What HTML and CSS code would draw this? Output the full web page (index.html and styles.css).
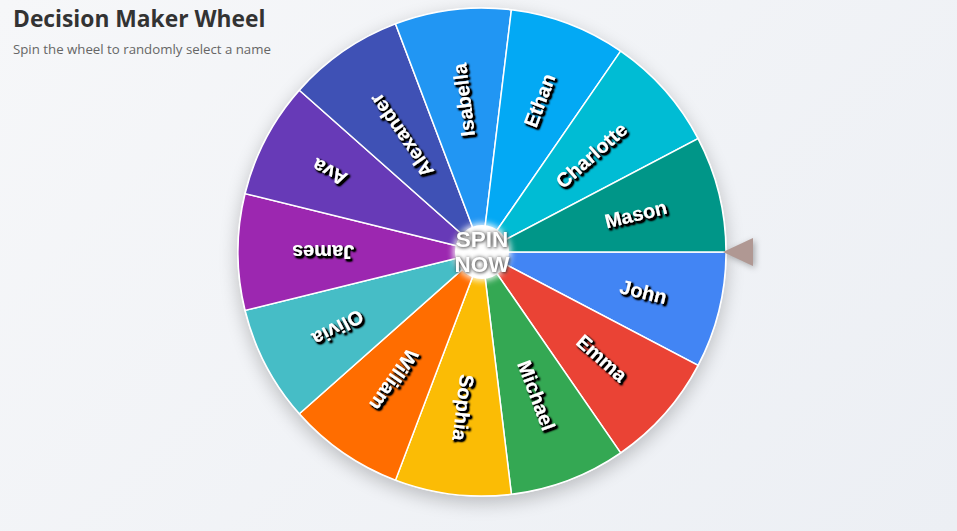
FILE: index.html
```html
<!DOCTYPE html>
<html lang="en">
<head>
<meta charset="utf-8">
<title>Decision Maker Wheel</title>
<link rel="stylesheet" href="styles.css">
</head>
<body>
<div class="page">
  <header class="header">
    <h1 class="title">Decision Maker Wheel</h1>
    <p class="subtitle">Spin the wheel to randomly select a name</p>
  </header>
  <main class="stage">
    <div class="wheel-wrap">
      <div class="wheel">
        <svg class="wheel-svg" width="490" height="490" viewBox="-245 -245 490 490">
          <defs>
            <filter id="ts" x="-20%" y="-20%" width="140%" height="140%">
              <feGaussianBlur in="SourceAlpha" stdDeviation="1.3"/>
              <feOffset dx="1.5" dy="1.5" result="off"/>
              <feComponentTransfer>
                <feFuncA type="linear" slope="2.2"/>
              </feComponentTransfer>
              <feMerge>
                <feMergeNode/>
                <feMergeNode in="SourceGraphic"/>
              </feMerge>
            </filter>
          </defs>
          <g class="slices">
            <path d="M0,0 L244,0 A244,244 0 0 1 216.05,113.39 Z" fill="#4285F4" transform="rotate(0)"/>
            <path d="M0,0 L244,0 A244,244 0 0 1 216.05,113.39 Z" fill="#EA4335" transform="rotate(27.6923)"/>
            <path d="M0,0 L244,0 A244,244 0 0 1 216.05,113.39 Z" fill="#34A853" transform="rotate(55.3846)"/>
            <path d="M0,0 L244,0 A244,244 0 0 1 216.05,113.39 Z" fill="#FBBC05" transform="rotate(83.0769)"/>
            <path d="M0,0 L244,0 A244,244 0 0 1 216.05,113.39 Z" fill="#FF6D00" transform="rotate(110.7692)"/>
            <path d="M0,0 L244,0 A244,244 0 0 1 216.05,113.39 Z" fill="#46BDC6" transform="rotate(138.4615)"/>
            <path d="M0,0 L244,0 A244,244 0 0 1 216.05,113.39 Z" fill="#9C27B0" transform="rotate(166.1538)"/>
            <path d="M0,0 L244,0 A244,244 0 0 1 216.05,113.39 Z" fill="#673AB7" transform="rotate(193.8462)"/>
            <path d="M0,0 L244,0 A244,244 0 0 1 216.05,113.39 Z" fill="#3F51B5" transform="rotate(221.5385)"/>
            <path d="M0,0 L244,0 A244,244 0 0 1 216.05,113.39 Z" fill="#2196F3" transform="rotate(249.2308)"/>
            <path d="M0,0 L244,0 A244,244 0 0 1 216.05,113.39 Z" fill="#03A9F4" transform="rotate(276.9231)"/>
            <path d="M0,0 L244,0 A244,244 0 0 1 216.05,113.39 Z" fill="#00BCD4" transform="rotate(304.6154)"/>
            <path d="M0,0 L244,0 A244,244 0 0 1 216.05,113.39 Z" fill="#009688" transform="rotate(332.3077)"/>
          </g>
          <g class="labels" filter="url(#ts)">
            <text transform="rotate(13.8462)" x="190" dy="0.35em">John</text>
            <text transform="rotate(41.5385)" x="190" dy="0.35em">Emma</text>
            <text transform="rotate(69.2308)" x="190" dy="0.35em">Michael</text>
            <text transform="rotate(96.9231)" x="190" dy="0.35em">Sophia</text>
            <text transform="rotate(124.6154)" x="190" dy="0.35em">William</text>
            <text transform="rotate(152.3077)" x="190" dy="0.35em">Olivia</text>
            <text transform="rotate(180)" x="190" dy="0.35em">James</text>
            <text transform="rotate(207.6923)" x="190" dy="0.35em">Ava</text>
            <text transform="rotate(235.3846)" x="190" dy="0.35em">Alexander</text>
            <text transform="rotate(263.0769)" x="190" dy="0.35em">Isabella</text>
            <text transform="rotate(290.7692)" x="190" dy="0.35em">Ethan</text>
            <text transform="rotate(318.4615)" x="190" dy="0.35em">Charlotte</text>
            <text transform="rotate(346.1538)" x="190" dy="0.35em">Mason</text>
          </g>
        </svg>
        <button class="spin-btn" type="button">SPIN NOW</button>
      </div>
      <div class="pointer"></div>
    </div>
  </main>
</div>
</body>
</html>
```
FILE: styles.css
```css
html, body {
  margin: 0;
  padding: 0;
  height: 100%;
}
body {
  background: linear-gradient(135deg, #f6f7f9 0%, #eceff4 100%);
  font-family: "Open Sans", "Noto Sans", sans-serif;
  color: #333;
  overflow: hidden;
}
.page {
  display: grid;
  min-height: 100%;
}
.header, .stage {
  grid-area: 1 / 1;
}
.header {
  padding: 4px 13px 0;
  align-self: start;
  position: relative;
  z-index: 1;
}
.title {
  margin: 0;
  font-size: 22.8px;
  font-weight: 700;
  line-height: 30px;
  color: #333;
}
.subtitle {
  margin: 6px 0 0;
  font-size: 13.25px;
  line-height: 18px;
  color: #666;
}
.stage {
  align-self: start;
  padding: 7px 0 0 237px;
}
.wheel-wrap {
  display: flex;
  align-items: center;
}
.wheel {
  position: relative;
  width: 490px;
  height: 490px;
  border-radius: 50%;
  box-shadow: 0 6px 18px rgba(0, 0, 0, 0.22);
  flex: none;
}
.wheel-svg {
  display: block;
}
.slices path {
  stroke: #fff;
  stroke-width: 1.5;
}
.labels text {
  font-family: "Liberation Sans", Arial, sans-serif;
  font-weight: 700;
  font-size: 20px;
  fill: #fff;
  text-anchor: end;
}
.spin-btn {
  position: absolute;
  left: 50%;
  top: 50%;
  width: 54px;
  height: 54px;
  margin: -27px 0 0 -27px;
  padding: 0;
  border: none;
  border-radius: 50%;
  background: #fff;
  box-shadow: 0 0 6px 2px rgba(255, 255, 255, 0.9);
  color: #fff;
  font-family: "Liberation Sans", Arial, sans-serif;
  font-weight: 700;
  font-size: 22.5px;
  line-height: 25px;
  text-shadow: 0 0 4px rgba(0, 0, 0, 0.6), 1px 1px 3px rgba(0, 0, 0, 0.45);
  display: flex;
  align-items: center;
  justify-content: center;
  text-align: center;
  white-space: normal;
  overflow: visible;
  cursor: pointer;
}
.pointer {
  flex: none;
  width: 0;
  height: 0;
  margin-left: -4px;
  border-top: 14px solid transparent;
  border-bottom: 14px solid transparent;
  border-right: 30px solid #b09893;
  filter: drop-shadow(2px 2px 3px rgba(0, 0, 0, 0.3));
}
```
